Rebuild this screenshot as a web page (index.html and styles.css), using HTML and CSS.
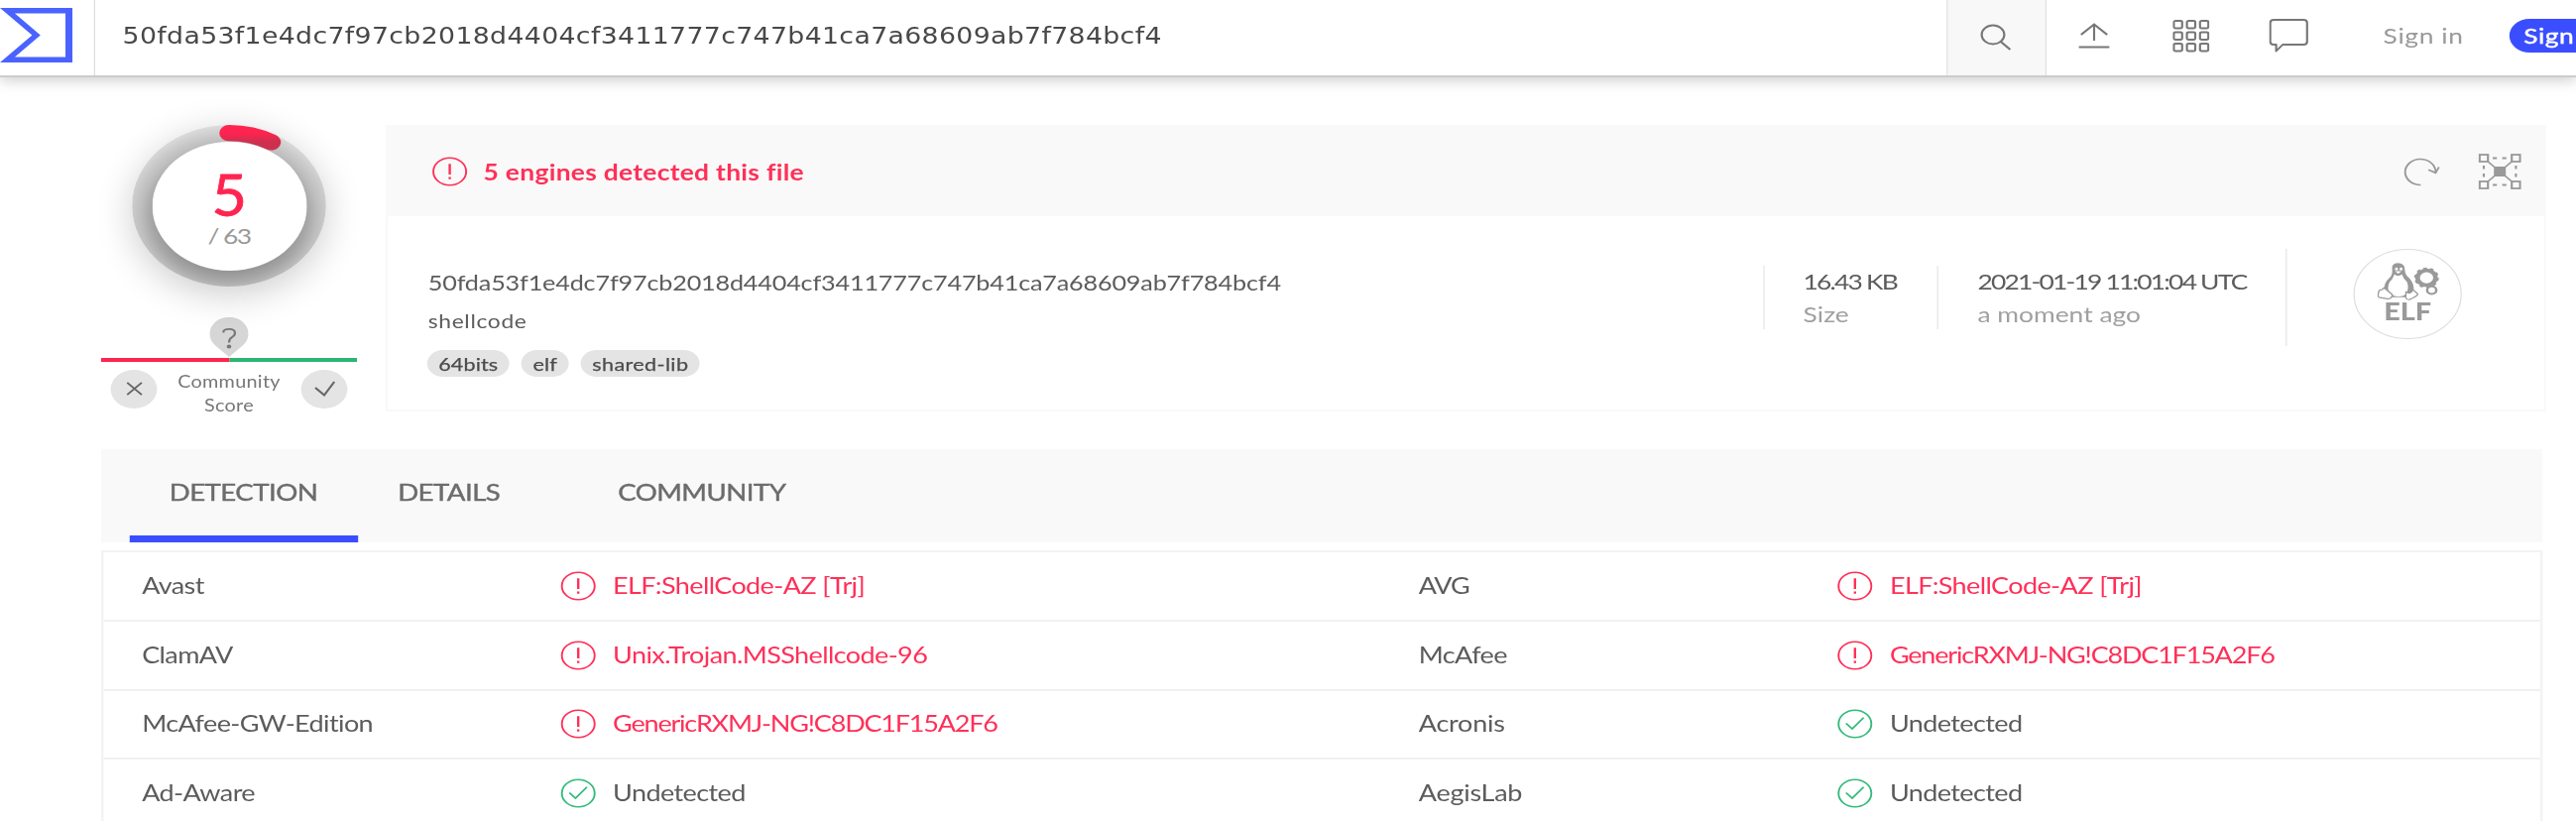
FILE: index.html
```html
<!DOCTYPE html>
<html lang="en">
<head>
<meta charset="utf-8">
<title>File report</title>
<link rel="stylesheet" href="styles.css">
</head>
<body>
<svg class="defs" aria-hidden="true">
  <symbol id="alert" viewBox="0 0 30 30"><g fill="none" stroke="currentColor" stroke-width="1.6"><circle cx="15" cy="15" r="13.8"/><path stroke-width="2" d="M15 7.3v10.6M15 20.4v2.4"/></g></symbol>
  <symbol id="ok" viewBox="0 0 30 30"><g fill="none" stroke="currentColor" stroke-width="1.6"><circle cx="15" cy="15" r="13.8"/><path d="M7.5 14.5l5.2 5.6L22.300 8.800"/></g></symbol>
</svg>
<div class="page">
  <header class="topbar">
    <a class="logo"><svg width="61" height="55" viewBox="0 0 61 55"><path fill="#4a63ff" fill-rule="evenodd" d="M0 0H61V55H0L27 27.500ZM12.500 5.500L34 27.500L12.500 49.500H55V5.500Z"/></svg></a>
    <div class="query">50fda53f1e4dc7f97cb2018d4404cf3411777c747b41ca7a68609ab7f784bcf4</div>
    <a class="search"><svg width="27" height="28" viewBox="0 0 27 28"><g fill="none" stroke="#777" stroke-width="1.8"><circle cx="11" cy="11" r="9.500"/><path d="M17.500 18l8 8"/></g></svg></a>
    <a class="tool"><svg width="26" height="26" viewBox="0 0 26 26"><g fill="none" stroke="#777" stroke-width="1.800"><path d="M13 18V1.500M2 12L13 1.500L24 12M0 24.500h26"/></g></svg></a>
    <a class="tool"><svg width="31" height="33" viewBox="0 0 31 33"><g fill="none" stroke="#777" stroke-width="1.800"><rect x="1" y="1" width="7" height="7.500" rx="1.500"/><rect x="12" y="1" width="7" height="7.500" rx="1.500"/><rect x="23" y="1" width="7" height="7.500" rx="1.500"/><rect x="1" y="12.500" width="7" height="7.500" rx="1.500"/><rect x="12" y="12.500" width="7" height="7.500" rx="1.500"/><rect x="23" y="12.500" width="7" height="7.500" rx="1.500"/><rect x="1" y="24" width="7" height="7.500" rx="1.500"/><rect x="12" y="24" width="7" height="7.500" rx="1.500"/><rect x="23" y="24" width="7" height="7.500" rx="1.500"/></g></svg></a>
    <a class="tool"><svg width="33" height="34" viewBox="0 0 33 34"><path fill="none" stroke="#777" stroke-width="1.800" stroke-linejoin="round" d="M4 1H29Q32 1 32 4V23Q32 26 29 26H11.500L6 32.500V26H4Q1 26 1 23V4Q1 1 4 1Z"/></svg></a>
    <a class="signin">Sign in</a>
    <a class="signup">Sign up</a>
  </header>
  <main>
    <section class="summary">
      <aside class="score">
        <div class="ring">
          <div class="hole"><b>5</b><span>/ 63</span></div>
          <svg class="arc" width="163" height="163" viewBox="0 0 163 163"><defs><linearGradient id="red" x1="0" y1="0" x2="0" y2="1"><stop offset="0" stop-color="#ff2450"/><stop offset="1" stop-color="#cc304e"/></linearGradient></defs><path d="M81.500 8.200A73.300 73.300 0 0 1 117 17.400" fill="none" stroke="url(#red)" stroke-width="16.300" stroke-linecap="round"/></svg>
        </div>
        <svg class="pin" width="33" height="40" viewBox="0 0 33 40"><path fill="#d6d6d6" d="M16.500 40L5 28.500A16.300 16.800 0 1 1 28 28.500Z"/><path fill="none" stroke="#777" stroke-width="1.800" d="M11.800 15.500V14.500Q12 11.800 16.500 11.800Q21.500 11.800 21.500 16Q21.500 18.300 18.800 20.300Q16.500 22 16.500 25.500"/><circle cx="16.500" cy="29.500" r="1.900" fill="#777"/></svg>
        <div class="meter"><i></i><i></i></div>
        <div class="votes">
          <a class="vote"><svg width="14" height="14" viewBox="0 0 16 16"><path fill="none" stroke="#666" stroke-width="1.800" d="M1 1l14 14M15 1l-14 14"/></svg></a>
          <p>Community<br>Score</p>
          <a class="vote"><svg width="18" height="16" viewBox="0 0 18 16"><path fill="none" stroke="#666" stroke-width="1.800" d="M1 7l7.500 7.500L17 1"/></svg></a>
        </div>
      </aside>
      <article class="card">
        <div class="card-head">
          <svg class="state bad"><use href="#alert"/></svg>
          <h1>5 engines detected this file</h1>
          <svg class="reload" width="31" height="29" viewBox="0 0 31 29"><g fill="none" stroke="#999" stroke-width="1.600"><path d="M14.500 27.500A12.800 13 0 1 1 27 14"/><path d="M21 12.200L27 15.300L29.800 9.500"/></g></svg>
          <svg class="graph" width="36" height="36" viewBox="0 0 36 36"><g fill="none" stroke="#999" stroke-width="1.800"><rect x="1" y="1" width="7" height="7"/><rect x="28" y="1" width="7" height="7"/><rect x="1" y="28" width="7" height="7"/><rect x="28" y="28" width="7" height="7"/><path d="M8 8l20 20M28 8L8 28" stroke-width="1.500"/><path stroke-dasharray="3.500 4.500" d="M12 4.500h14M12 31.500h14M4.500 12v14M31.500 12v14"/></g><rect x="13" y="13" width="10" height="10" fill="#999"/></svg>
        </div>
        <div class="card-body">
          <div class="ident">
            <p class="hash">50fda53f1e4dc7f97cb2018d4404cf3411777c747b41ca7a68609ab7f784bcf4</p>
            <p class="name">shellcode</p>
            <div class="tags"><span class="tag">64bits</span><span class="tag">elf</span><span class="tag wide">shared-lib</span></div>
          </div>
          <div class="stat size"><span>16.43 KB</span><br><em>Size</em></div>
          <div class="stat date"><span>2021-01-19 11:01:04 UTC</span><br><em>a moment ago</em></div>
          <div class="type">
            <div class="elf">
              <svg width="52" height="39" viewBox="0 0 54 40">
                <path fill="#9a9a9a" d="M13 8Q12 1 18 1Q24 1 24 8Q24 13 28 17Q33 24 31.500 31L26 37H12L6 31Q5 22 11 16Q13.500 13 13 8Z"/>
                <path fill="#fff" d="M15 13Q18 16 21.500 13Q23 18 26 21Q28 28 25 33Q24 36 18 36Q12 36 9.500 29Q9 22 13 18Z"/>
                <path fill="#fff" d="M15.500 7a1.300 1.800 0 0 1 2.500 0v1.500h-2.500zM19.500 7a1.300 1.800 0 0 1 2.500 0v1.500h-2.500zM15.500 9.700h5.500l-2.700 2.500z"/>
                <path fill="#fff" stroke="#9a9a9a" stroke-width="1.200" stroke-linejoin="round" d="M6 27L13 34Q13 39 9 38.500L1.500 37Q0 36 1 33Q1 29 4 29ZM25 31Q29 35 31 29L35 33Q36 35 32 37L28 39.500Q24 39 25 35Z"/>
                <circle cx="43" cy="16.500" r="7.800" fill="none" stroke="#9a9a9a" stroke-width="4"/>
                <circle cx="43" cy="16.500" r="9.900" fill="none" stroke="#9a9a9a" stroke-width="1.800" stroke-dasharray="3.200 3"/>
                <circle cx="47.500" cy="29.500" r="4" fill="#fff" stroke="#9a9a9a" stroke-width="2.200"/>
              </svg>
              <strong>ELF</strong>
            </div>
          </div>
        </div>
      </article>
    </section>
    <nav class="tabs"><a class="tab active">DETECTION</a><a class="tab details">DETAILS</a><a class="tab">COMMUNITY</a></nav>
    <section class="results">
      <div class="row"><span class="engine">Avast</span><svg class="state bad"><use href="#alert"/></svg><span class="verdict bad">ELF:ShellCode-AZ [Trj]</span><span class="engine tight">AVG</span><svg class="state bad"><use href="#alert"/></svg><span class="verdict bad">ELF:ShellCode-AZ [Trj]</span></div>
      <div class="row"><span class="engine">ClamAV</span><svg class="state bad"><use href="#alert"/></svg><span class="verdict bad">Unix.Trojan.MSShellcode-96</span><span class="engine">McAfee</span><svg class="state bad"><use href="#alert"/></svg><span class="verdict bad tight">GenericRXMJ-NG!C8DC1F15A2F6</span></div>
      <div class="row"><span class="engine">McAfee-GW-Edition</span><svg class="state bad"><use href="#alert"/></svg><span class="verdict bad tight">GenericRXMJ-NG!C8DC1F15A2F6</span><span class="engine loose">Acronis</span><svg class="state good"><use href="#ok"/></svg><span class="verdict">Undetected</span></div>
      <div class="row"><span class="engine">Ad-Aware</span><svg class="state good"><use href="#ok"/></svg><span class="verdict">Undetected</span><span class="engine loose">AegisLab</span><svg class="state good"><use href="#ok"/></svg><span class="verdict">Undetected</span></div>
    </section>
  </main>
</div>
</body>
</html>
```
FILE: styles.css
```css
* { box-sizing: border-box; }
body { margin: 0; background: #fff; overflow: hidden; font-family: Lato, "Liberation Sans", sans-serif; color: #5c5c5c; }
p, h1 { margin: 0; }
.defs { position: absolute; width: 0; height: 0; }
.page { width: 2165px; height: 828px; overflow: hidden; transform: scaleX(1.2); transform-origin: 0 0; }

.topbar { display: flex; align-items: center; height: 78px; border-bottom: 2px solid #ccc; box-shadow: 0 3px 12px rgba(0, 0, 0, .2); }
.logo { display: flex; width: 80px; height: 76px; padding-top: 8px; border-right: 1.500px solid #ddd; }
.query { flex: 1; height: 76px; padding-left: 23px; font: 22.300px/73px "DejaVu Sans", sans-serif; letter-spacing: .28px; color: #484848; white-space: nowrap; }
.search { display: flex; align-items: center; justify-content: center; width: 84px; height: 76px; background: #f8f8f8; border: solid #e0e0e0; border-width: 0 1px; }
.tool { display: flex; justify-content: center; width: 81.500px; padding-bottom: 4px; }
.signin { flex: none; width: 106px; margin: 0 0 4px 39px; font-size: 22px; letter-spacing: .5px; line-height: 34px; color: #999; white-space: nowrap; }
.signup { flex: none; width: 56px; height: 34px; margin-bottom: 4px; padding-left: 12px; border-radius: 17px 0 0 17px; background: #3b4eff; color: #fff; font-size: 22px; letter-spacing: .4px; -webkit-text-stroke: .4px #fff; line-height: 34px; white-space: nowrap; overflow: hidden; }

main { padding: 48px 25px 0 85px; }
.summary { display: flex; gap: 24.300px; height: 289px; }
.score { width: 215px; display: flex; flex-direction: column; align-items: center; }
.score > * { flex: none; }
.ring { position: relative; display: flex; align-items: center; justify-content: center; width: 163px; height: 163px; border-radius: 50%; background: radial-gradient(circle at 50% 56%, #939393 55px, #a8a8a8 66px, #bdbdbd 74px, #cfcfcf 84px, #dedede 92px); box-shadow: 0 8px 34px rgba(0, 0, 0, .2); }
.hole { position: relative; display: flex; flex-direction: column; align-items: center; width: 130px; height: 130px; padding-top: 24px; border-radius: 50%; background: #fff; }
.hole b { font-size: 58px; line-height: 58px; font-weight: 400; color: #ff2450; -webkit-text-stroke: .8px #ff2450; transform: scaleX(.88); }
.hole span { margin-top: 0; font-size: 22px; letter-spacing: -1.300px; line-height: 26px; color: #999; }
.arc { position: absolute; left: 0; top: 0; }
.pin { margin-top: 31px; }
.meter { display: flex; width: 215px; height: 3.500px; margin-top: 1px; }
.meter i { flex: 1; background: #ff2450; }
.meter i + i { background: #2bb673; }
.votes { display: flex; justify-content: space-between; width: 199px; padding-top: 8px; }
.vote { display: flex; align-items: center; justify-content: center; width: 39px; height: 39px; border-radius: 50%; background: #e4e4e4; }
.votes p { text-align: center; font-size: 16.500px; letter-spacing: .25px; line-height: 24.500px; color: #777; }

.card { flex: 1; border: 2px solid #f9f9f9; }
.card-head { display: flex; align-items: center; height: 90px; padding: 0 19px 0 37px; background: #f9f9f9; color: #ff2450; }
.state { width: 30px; height: 30px; flex: none; }
.bad { color: #ff3058; }
.good { color: #35bb7c; }
h1 { flex: 1; margin-left: 13px; font-size: 22px; letter-spacing: .24px; font-weight: 700; line-height: 35px; color: #ff3058; }
.reload { margin-right: 32px; }
.card-body { display: flex; height: 195px; }
.ident { flex: 1; padding: 53px 0 0 33.500px; }
.hash { font-size: 21px; letter-spacing: -.150px; line-height: 28px; }
.name { margin-top: 13px; font-size: 19px; letter-spacing: .55px; line-height: 24px; }
.tags { display: flex; gap: 10px; margin: 17px 0 0 -1px; }
.tag { height: 27px; padding: 0 9.700px; border-radius: 14px; background: #e4e4e4; font-size: 18px; letter-spacing: .1px; line-height: 28px; color: #4c4c4c; -webkit-text-stroke: .25px #4c4c4c; }
.tag.wide { letter-spacing: .3px; }
.stat { margin-top: 50px; height: 64px; padding-left: 33px; border-left: 1.500px solid #e4e4e4; font-size: 22px; line-height: 32.500px; white-space: nowrap; }
.stat span { letter-spacing: -1.500px; }
.stat em { font-style: normal; color: #a0a0a0; }
.size { width: 146.500px; }
.date { width: 293px; }
.type { width: 217px; height: 98px; margin-top: 33px; padding-left: 56px; border-left: 1.500px solid #e4e4e4; }
.elf { display: flex; flex-direction: column; align-items: center; width: 91px; height: 91px; padding-top: 12px; border: 1.200px solid #ddd; border-radius: 50%; }
.elf strong { font-size: 24px; font-weight: 900; line-height: 22px; color: #9a9a9a; }

.tabs { display: flex; width: 2052px; height: 94px; margin-top: 38px; padding-left: 24.300px; background: #f9f9f9; font-size: 23px; letter-spacing: -.450px; line-height: 87px; color: #6c6c6c; -webkit-text-stroke: .4px #6c6c6c; }
.tab { padding: 0 33px; }
.tab.active { width: 192px; border-bottom: 7px solid #3b4eff; }
.tab.details { width: 185px; }
.results { width: 2052px; margin-top: 8px; border: 2px solid #f3f3f3; }
.row { display: grid; grid-template-columns: 351.500px 44.300px 677.200px 351.500px 44.500px 1fr; align-items: center; height: 69.800px; padding-left: 32.300px; border-bottom: 2px solid #f1f1f1; font-size: 22.500px; letter-spacing: -.500px; line-height: 30px; white-space: nowrap; }
.tight { letter-spacing: -1px; }
.loose { letter-spacing: -.200px; }
```
